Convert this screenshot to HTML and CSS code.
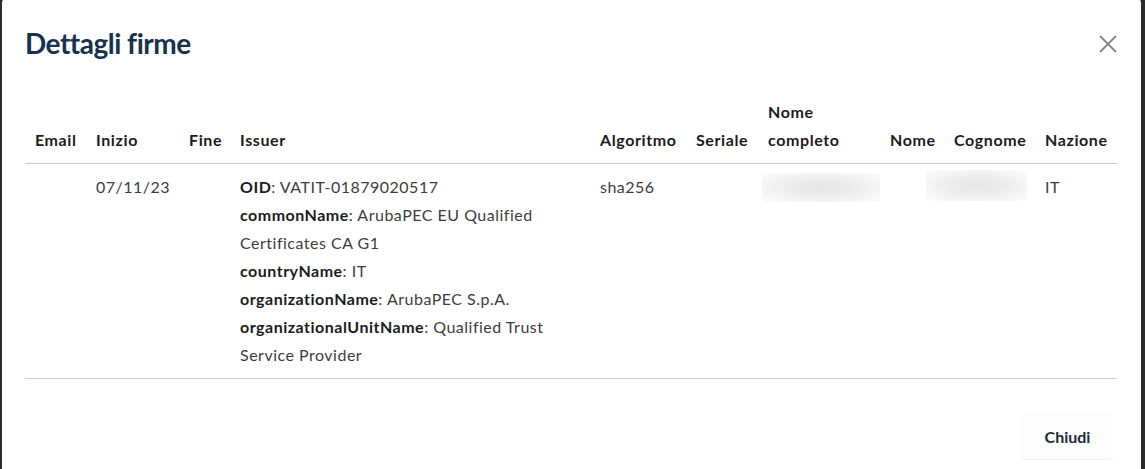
FILE: index.html
```html
<!DOCTYPE html>
<html lang="it">
<head>
<meta charset="utf-8">
<title>Dettagli firme</title>
<link rel="stylesheet" href="styles.css">
</head>
<body>
<div class="modal">
  <div class="modal-header">
    <h2 class="modal-title">Dettagli firme</h2>
    <button class="close" aria-label="Chiudi">
      <svg width="18" height="18" viewBox="0 0 18 18"><path d="M1 1 L17 17 M17 1 L1 17" stroke="#8a8a8a" stroke-width="2" fill="none"/></svg>
    </button>
  </div>
  <div class="modal-body">
    <table class="sig-table">
      <colgroup>
        <col class="c-email"><col class="c-inizio"><col class="c-fine"><col class="c-issuer"><col class="c-algo"><col class="c-seriale"><col class="c-nomec"><col class="c-nome"><col class="c-cognome"><col class="c-nazione">
      </colgroup>
      <thead>
        <tr>
          <th>Email</th><th>Inizio</th><th>Fine</th><th>Issuer</th><th>Algoritmo</th><th>Seriale</th><th>Nome<br>completo</th><th>Nome</th><th>Cognome</th><th>Nazione</th>
        </tr>
      </thead>
      <tbody>
        <tr>
          <td></td>
          <td>07/11/23</td>
          <td></td>
          <td class="issuer">
            <b>OID</b>: VATIT-01879020517<br>
            <b>commonName</b>: ArubaPEC EU Qualified<br>
            Certificates CA G1<br>
            <b>countryName</b>: IT<br>
            <b>organizationName</b>: ArubaPEC S.p.A.<br>
            <b>organizationalUnitName</b>: Qualified Trust<br>
            Service Provider
          </td>
          <td>sha256</td>
          <td></td>
          <td><span class="blur blur-nomec"></span></td>
          <td></td>
          <td><span class="blur blur-cognome"></span></td>
          <td>IT</td>
        </tr>
      </tbody>
    </table>
  </div>
  <div class="modal-footer">
    <button class="btn">Chiudi</button>
  </div>
</div>
</body>
</html>
```

FILE: styles.css
```css
html, body {
  margin: 0;
  padding: 0;
  height: 100%;
}
body {
  background: #2b2b2b;
  overflow: hidden;
  font-family: Lato, "Open Sans", "Liberation Sans", sans-serif;
}
.modal {
  margin-left: 2px;
  margin-top: -3px;
  width: 1139px;
  height: 490px;
  background: #ffffff;
  border-radius: 6px;
  box-sizing: border-box;
  padding: 0 24px 0 23px;
  display: flex;
  flex-direction: column;
}
.modal-header {
  display: flex;
  align-items: center;
  justify-content: space-between;
  padding-top: 29px;
}
.modal-title {
  margin: 0;
  font-size: 28px;
  line-height: 35px;
  font-weight: 700;
  letter-spacing: -0.5px;
  color: #17324d;
}
.close {
  border: 0;
  background: none;
  padding: 0;
  width: 18px;
  height: 18px;
  display: flex;
  cursor: pointer;
}
.modal-body {
  margin-top: 29px;
}
.sig-table {
  width: 1092px;
  table-layout: fixed;
  border-collapse: collapse;
  font-size: 16px;
  line-height: 28px;
}
.c-email { width: 61px; }
.c-inizio { width: 93px; }
.c-fine { width: 51px; }
.c-issuer { width: 360px; }
.c-algo { width: 96px; }
.c-seriale { width: 72px; }
.c-nomec { width: 122px; }
.c-nome { width: 64px; }
.c-cognome { width: 91px; }
.c-nazione { width: 82px; }
.sig-table th {
  text-align: left;
  vertical-align: bottom;
  font-weight: 700;
  letter-spacing: 0.6px;
  color: #1c1c1c;
  padding: 8px 10px 9px;
  border-bottom: 1px solid #cccccc;
  white-space: nowrap;
}
.sig-table td {
  vertical-align: top;
  color: #3d3d3d;
  letter-spacing: 0.5px;
  padding: 9px 10px 9px;
  border-bottom: 1px solid #cccccc;
  white-space: nowrap;
}
.sig-table td b {
  font-weight: 700;
  color: #1c1c1c;
}
.blur {
  display: block;
  background: radial-gradient(ellipse at center, #e6e6e6 0%, #ececec 35%, #f6f6f6 75%, #fcfcfc 100%);
}
.blur-nomec {
  width: 118px;
  height: 29px;
  margin-left: -6px;
}
.blur-cognome {
  width: 101px;
  height: 31px;
  margin-left: -28px;
  margin-top: -3px;
}
.modal-footer {
  display: flex;
  justify-content: flex-end;
  padding-top: 34px;
  padding-right: 4px;
}
.btn {
  width: 91px;
  height: 46px;
  border: 0;
  border-radius: 4px;
  background: #fdfdfd;
  box-shadow: 0 1px 1px rgba(0,0,0,0.06), 0 0 1px rgba(0,0,0,0.05);
  font-family: Lato, "Open Sans", "Liberation Sans", sans-serif;
  font-size: 16px;
  font-weight: 700;
  color: #1b2a3a;
  cursor: pointer;
}
```
